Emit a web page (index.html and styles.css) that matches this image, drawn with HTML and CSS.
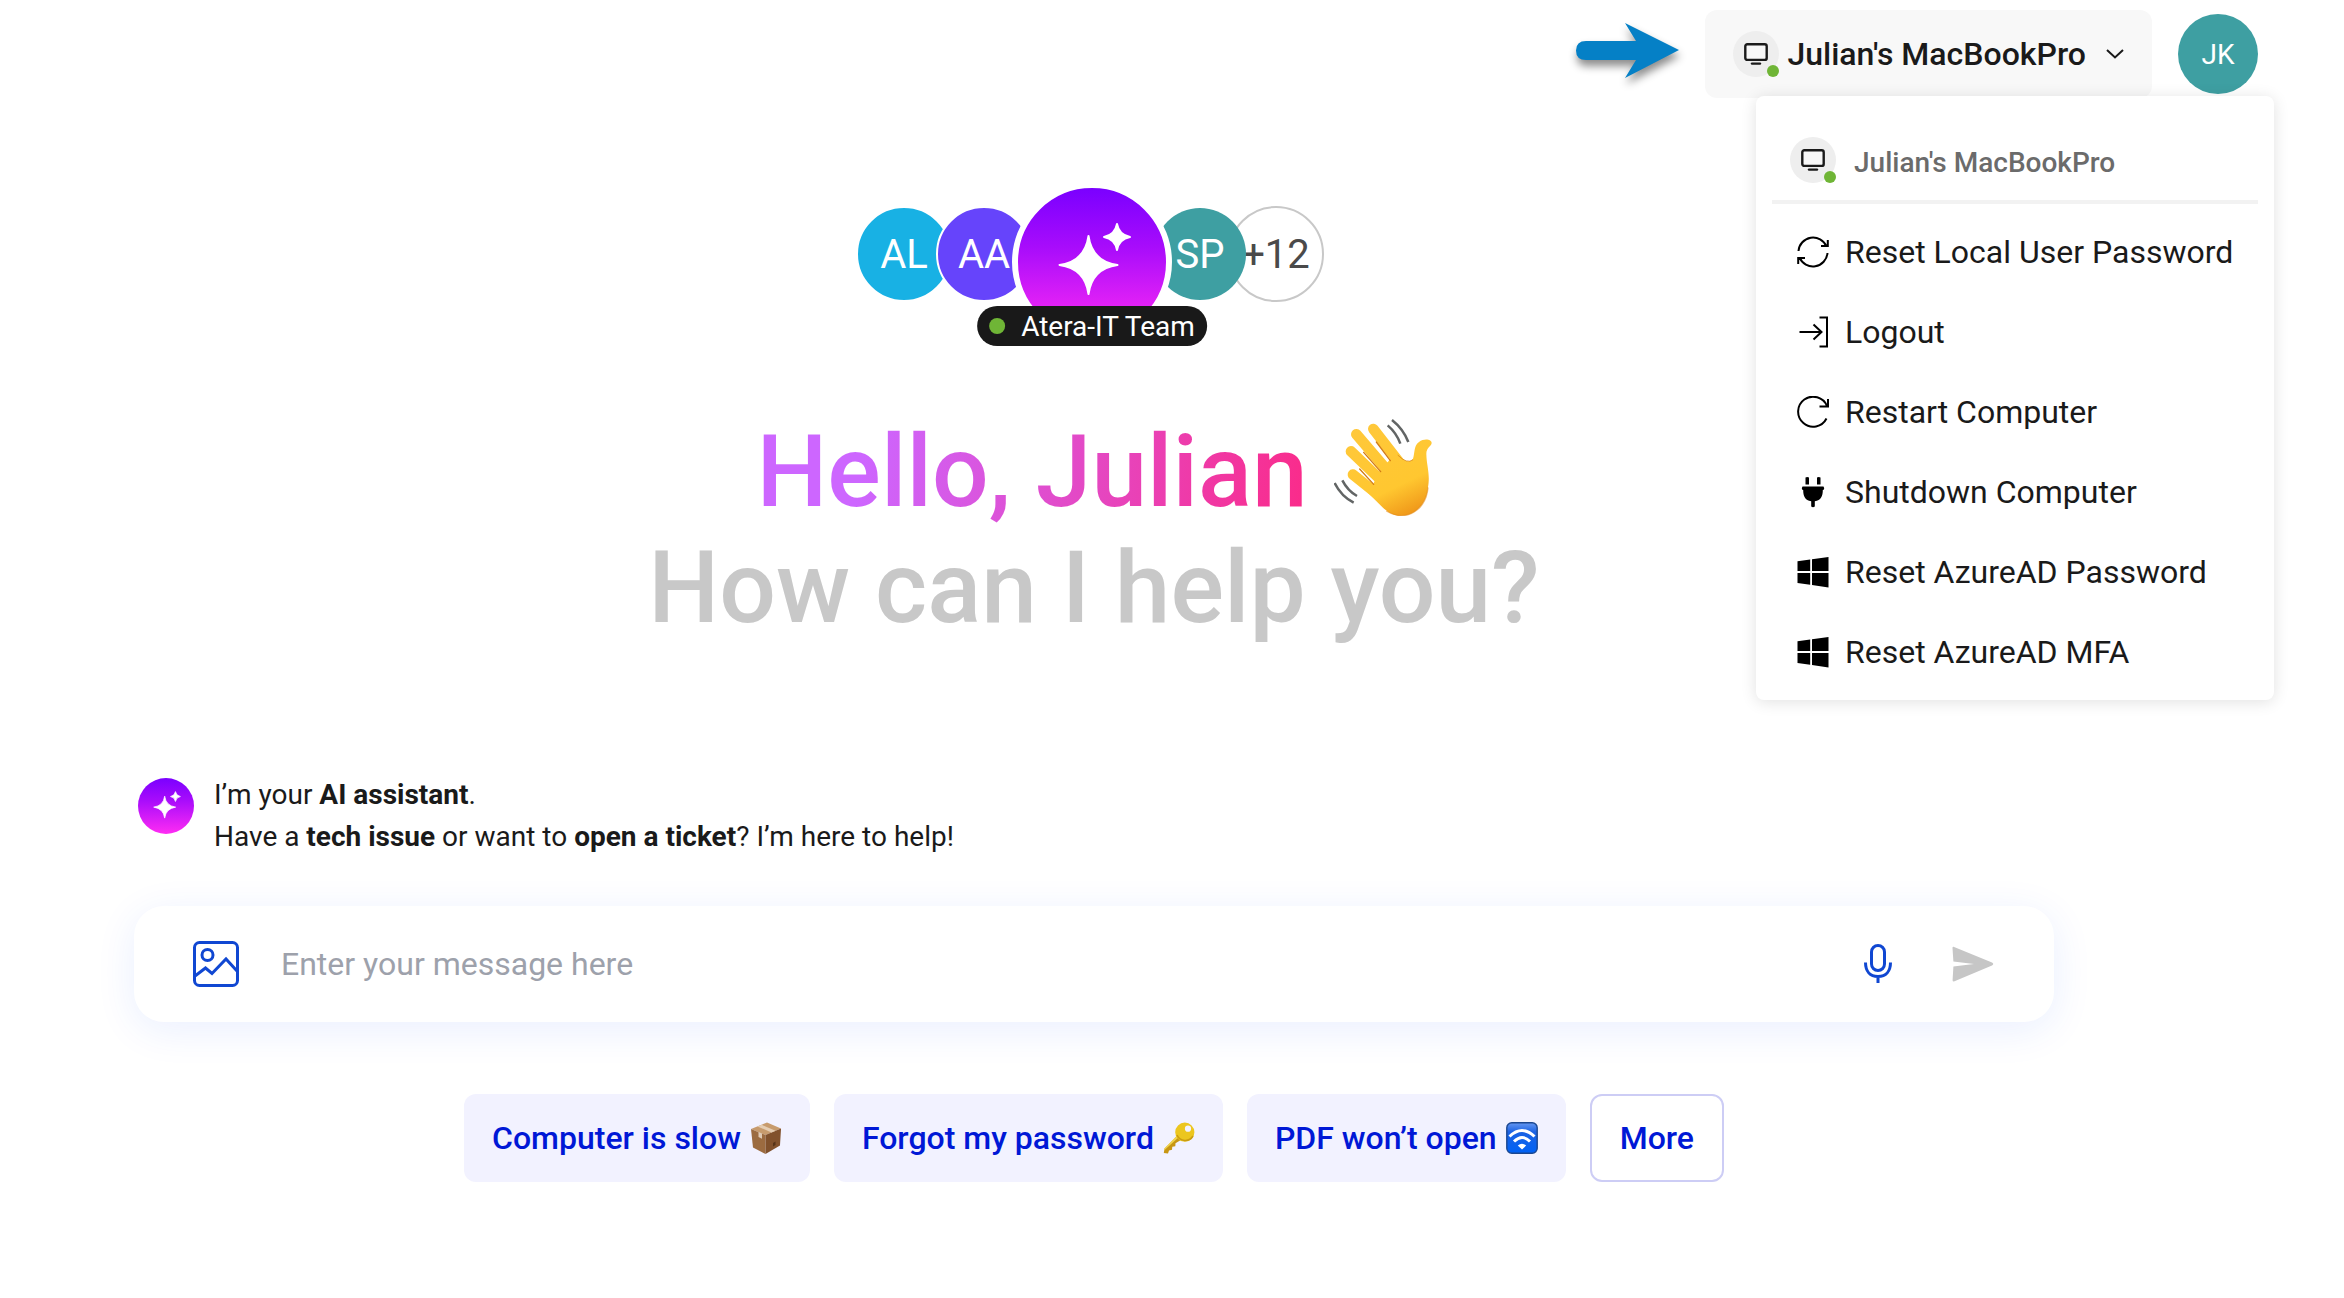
FILE: index.html
```html
<!DOCTYPE html>
<html lang="en">
<head>
    <meta charset="UTF-8">
    <meta name="viewport" content="width=device-width, initial-scale=1.0">
    <title>AI assistant</title>
    <link rel="stylesheet" href="styles.css">
</head>
<body>
    <!-- shared icons -->
    <svg class="sprite" aria-hidden="true">
        <symbol id="sparkle" viewBox="0 0 148 148">
            <g fill="#fff" stroke="#fff" stroke-width="2" stroke-linejoin="round">
                <path d="M70.500 48Q74 73.500 99.500 77Q74 80.500 70.500 106Q67 80.500 41.500 77Q67 73.500 70.500 48Z"/>
                <path d="M99 36Q101 47 112 49Q101 51 99 62Q97 51 86 49Q97 47 99 36Z"/>
            </g>
        </symbol>
        <symbol id="monitor" viewBox="0 0 24 22">
            <rect x="1.3" y="1.3" width="21.4" height="15.6" rx="2" fill="#f7f7f7" stroke="#1a1a1a" stroke-width="2.4"/>
            <path d="M8 20.6H16" stroke="#1a1a1a" stroke-width="2.4" stroke-linecap="round"/>
        </symbol>
        <symbol id="windows" viewBox="0 0 32 32">
            <path d="M.5 5.2L13.2 3.5V15H.5ZM15 3.2L31.5 1V15H15ZM.5 17H13.2V28.7L.5 27ZM15 17H31.5V31.4L15 29Z"/>
        </symbol>
    </svg>

    <header class="header">
        <svg class="pointer" viewBox="0 0 103 56" aria-hidden="true">
            <path d="M10 18H60L49 0L103 27L49 55L60 37H10Q0 37 0 27.500Q0 18 10 18Z" fill="#0580c6"/>
        </svg>
        <div class="device">
            <button class="device-button" type="button" aria-haspopup="true" aria-expanded="true">
                <span class="device-icon"><svg><use href="#monitor"/></svg></span>
                <span>Julian's MacBookPro</span>
                <svg class="chevron" viewBox="0 0 18 10" aria-hidden="true"><path d="M1 1L9 8.500L17 1"/></svg>
            </button>
            <div class="menu">
                <div class="menu-title">
                    <span class="device-icon"><svg><use href="#monitor"/></svg></span>
                    <span>Julian's MacBookPro</span>
                </div>
                <ul class="menu-list">
                    <li><button type="button">
                        <svg class="line" viewBox="0 0 32 32"><path d="M1.500 15A14.600 14.600 0 0 1 29.500 10.500M30.800 4V10H24M30.500 17A14.600 14.600 0 0 1 2.500 21.500M1.200 28V22H8"/></svg>
                        Reset Local User Password
                    </button></li>
                    <li><button type="button">
                        <svg class="line" viewBox="0 0 32 32"><path d="M2.500 16H24.500M16.500 8.500L24.500 16L16.500 23.500M22.500 1.500H30V30.500H22.500"/></svg>
                        Logout
                    </button></li>
                    <li><button type="button">
                        <svg class="line" viewBox="0 0 32 32"><path d="M30 10A15 15 0 1 0 29.500 22.500M31 3V10.500H22.500"/></svg>
                        Restart Computer
                    </button></li>
                    <li><button type="button">
                        <svg viewBox="0 0 32 32"><path d="M8.500 1.500Q10.200 .5 12 1.500V8.500H8.500ZM20 1.500Q21.800 .5 23.500 1.500V8.500H20ZM5.500 10.500H26.500Q28 12.300 26.500 14H25.800C25.800 20 24 24.500 17.800 25.300V30.500Q16 32 14.200 30.500V25.300C8 24.500 6.200 20 6.200 14H5.500Q4 12.300 5.500 10.500Z"/></svg>
                        Shutdown Computer
                    </button></li>
                    <li><button type="button">
                        <svg><use href="#windows"/></svg>
                        Reset AzureAD Password
                    </button></li>
                    <li><button type="button">
                        <svg><use href="#windows"/></svg>
                        Reset AzureAD MFA
                    </button></li>
                </ul>
            </div>
        </div>
        <button class="user" type="button">JK</button>
    </header>

    <main class="main">
        <div class="team">
            <span class="avatar blue">AL</span>
            <span class="avatar violet">AA</span>
            <div class="bot">
                <svg><use href="#sparkle"/></svg>
                <span class="team-name">Atera-IT Team</span>
            </div>
            <span class="avatar teal">SP</span>
            <span class="avatar more">+12</span>
        </div>

        <h1 class="greeting">
            <span class="hello">
                <span class="gradient-text">Hello, Julian</span>
                <svg class="wave" viewBox="39 24 294 294" role="img" aria-label="waving hand">
                    <defs>
                        <linearGradient id="skin" gradientUnits="userSpaceOnUse" x1="120" y1="50" x2="250" y2="318">
                            <stop offset="0" stop-color="#ffc83a"/>
                            <stop offset=".7" stop-color="#ffc730"/>
                            <stop offset="1" stop-color="#f0991a"/>
                        </linearGradient>
                    </defs>
                    <g fill="none" stroke="url(#skin)" stroke-width="32" stroke-linecap="round">
                        <path d="M157 57L245 170"/>
                        <path d="M106 73L215 200"/>
                        <path d="M90 124L195 225"/>
                        <path d="M96 194L185 265"/>
                    </g>
                    <path d="M230 134Q262 166 276 146C282 128 278 107 294 96C310 84 332 88 332 99C331 110 316 112 316 132C317 170 328 190 321 232C318 270 298 302 262 314C232 323 208 314 186 293L142 250L160 215L178 180L208 148Z" fill="url(#skin)"/>
                    <g fill="none" stroke="#d27c14" stroke-width="4" stroke-linecap="round">
                        <path d="M166 96L208 152"/>
                        <path d="M128 127L179 185"/>
                        <path d="M116 177L158 223"/>
                        <path d="M231 136Q258 163 275 150" stroke-width="2"/>
                    </g>
                    <path d="M196 303Q228 323 262 314C298 302 318 270 321 232" fill="none" stroke="#e58d1c" stroke-width="4" opacity=".6"/>
                    <g fill="none" stroke="#626565" stroke-width="7.500">
                        <path d="M213 30Q247 57 262 96M200 46Q227 69 238 101M41 219Q60 258 98 278M64 211Q80 242 108 258"/>
                    </g>
                </svg>
            </span>
            <span class="question">How can I help you?</span>
        </h1>

        <div class="intro">
            <span class="bot-small"><svg><use href="#sparkle"/></svg></span>
            <p>I’m your <b>AI assistant</b>.<br>Have a <b>tech issue</b> or want to <b>open a ticket</b>? I’m here to help!</p>
        </div>

        <form class="composer">
            <button class="icon-button" type="button" aria-label="Add image">
                <svg class="icon-image" viewBox="0 0 46 46"><rect x="1.500" y="1.500" width="43" height="43" rx="5"/><circle cx="14.500" cy="14" r="5.500"/><path d="M2 35L12.500 27L19 32.500L33 18L44 30"/></svg>
            </button>
            <input class="message" type="text" placeholder="Enter your message here" aria-label="Message">
            <button class="icon-button" type="button" aria-label="Voice input">
                <svg class="icon-mic" viewBox="0 0 28 40"><rect x="7.500" y="1.500" width="13" height="25" rx="6.500"/><path d="M1.500 18.500C1.500 27 6 32.500 14 32.500S26.500 27 26.500 18.500M14 32.500V39"/></svg>
            </button>
            <button class="icon-button" type="submit" aria-label="Send">
                <svg class="icon-send" viewBox="0 0 42 36"><path d="M1.500 .8L40 16.500Q42.500 18 40 19.500L2.500 35.300Q.5 35.800 .6 34L1.400 20.500L22 18L1.400 15.500L.5 2Q.5 .5 1.500 .8Z"/></svg>
            </button>
        </form>

        <div class="suggestions">
            <button class="chip" type="button">Computer is slow
                <svg viewBox="0 0 32 32" aria-hidden="true">
                    <path d="M1 7L17 .5L31 6.500L15.500 13Z" fill="#c79b6d"/>
                    <path d="M1 7L15.500 13V32L3 25.500Z" fill="#9c6b40"/>
                    <path d="M15.500 13L31 6.500L30 23.500L15.500 32Z" fill="#81512c"/>
                    <path d="M7.500 4.400L11.500 2.700L25.500 8.800L21.500 10.500Z" fill="#e5cdb2"/>
                    <path d="M8.500 10V15L12 16.700V11.600Z" fill="#dfc9b4"/>
                    <path d="M23 21L25.500 19.500V23L23 24.400Z" fill="#563319"/>
                </svg>
            </button>
            <button class="chip" type="button">Forgot my password
                <svg viewBox="0 0 32 32" aria-hidden="true">
                    <path d="M15 13L1.500 26.500L.8 31L5 31.400L6 28.500L9 27.800L9.300 24.700L12.300 24.300L12.500 21.300L19.500 17Z" fill="#c79613"/>
                    <path d="M14.800 12.700L1.500 26.500L1 28.500L16 15Z" fill="#f0d34c"/>
                    <path fill-rule="evenodd" d="M21.800 .6A9.600 9.600 0 1 0 21.800 19.800A9.600 9.600 0 1 0 21.800 .6ZM25 3.600A3.100 3.100 0 1 1 25 9.800A3.100 3.100 0 1 1 25 3.600Z" fill="#ecc61f"/>
                    <path d="M14 13A9 9 0 0 0 30 14" fill="none" stroke="#c99c12" stroke-width="1.500"/>
                </svg>
            </button>
            <button class="chip" type="button">PDF won’t open
                <svg viewBox="0 0 32 32" aria-hidden="true">
                    <defs>
                        <linearGradient id="tile" x1="0" y1="0" x2="0" y2="1">
                            <stop offset="0" stop-color="#6597f2"/>
                            <stop offset=".3" stop-color="#1b62e3"/>
                            <stop offset="1" stop-color="#0062f5"/>
                        </linearGradient>
                    </defs>
                    <rect x=".8" y=".8" width="30.400" height="30.400" rx="5" fill="url(#tile)" stroke="#1b4790" stroke-width="1.400"/>
                    <g fill="none" stroke="#fff" stroke-width="3">
                        <path d="M3.500 14.500Q16 2.500 28.500 14.500M8 19.500Q16 11.500 24 19.500"/>
                    </g>
                    <path d="M11.800 23.500Q16 20 20.200 23.500L16 27.500Z" fill="#fff"/>
                </svg>
            </button>
            <button class="chip outline" type="button">More</button>
        </div>
    </main>
</body>
</html>
```

FILE: styles.css
```css
* {
    margin: 0;
    padding: 0;
    box-sizing: border-box;
}

body {
    font-family: Roboto, "Liberation Sans", sans-serif;
    font-size: 32px;
    color: #1a1a1a;
    background: #fff;
    min-height: 100vh;
}

button {
    font: inherit;
    color: inherit;
    background: none;
    border: none;
    cursor: pointer;
}

svg {
    display: block;
    flex: none;
}

.sprite {
    position: absolute;
    width: 0;
    height: 0;
}

/* header */
.header {
    display: flex;
    justify-content: flex-end;
    align-items: center;
    gap: 26px;
    padding: 10px 86px 0 24px;
}

.pointer {
    width: 103px;
    height: 56px;
    margin-bottom: 6px;
    overflow: visible;
    filter: drop-shadow(1px 6px 4px rgba(0, 0, 0, 0.45));
}

.device {
    position: relative;
}

.device-button {
    display: flex;
    align-items: center;
    height: 88px;
    padding: 0 28px;
    background: #f8f8f8;
    border-radius: 12px;
    font-weight: 500;
}

.device-icon {
    position: relative;
    display: flex;
    align-items: center;
    justify-content: center;
    width: 46px;
    height: 46px;
    margin-right: 8px;
    background: #eee;
    border-radius: 50%;
}

.device-icon svg {
    width: 24px;
    height: 22px;
}

/* online dot */
.device-icon::after {
    content: "";
    position: absolute;
    right: 0;
    bottom: 0;
    width: 12px;
    height: 12px;
    background: #6fb536;
    border-radius: 50%;
}

.chevron {
    width: 18px;
    height: 10px;
    margin-left: 20px;
    fill: none;
    stroke: #1a1a1a;
    stroke-width: 2;
}

.user {
    width: 80px;
    height: 80px;
    border-radius: 50%;
    background: #3e9fa2;
    color: #fff;
    font-size: 28px;
}

/* dropdown */
.menu {
    position: absolute;
    z-index: 5;
    top: 86px;
    right: -122px;
    width: 518px;
    padding: 0 16px 8px;
    background: #fff;
    border-radius: 8px;
    box-shadow: 0 2px 16px rgba(0, 0, 0, 0.12);
}

.menu-title {
    display: flex;
    align-items: flex-end;
    padding: 41px 18px 17px;
    border-bottom: 4px solid #f2f2f2;
    margin-bottom: 8px;
    color: #6b6b6b;
    font-size: 28px;
    line-height: 40px;
    font-weight: 500;
}

.menu-title .device-icon {
    margin-right: 18px;
}

.menu-list {
    list-style: none;
}

.menu-list button {
    display: flex;
    align-items: center;
    gap: 16px;
    width: 100%;
    height: 80px;
    padding: 0 25px;
    text-align: left;
    white-space: nowrap;
}

.menu-list svg {
    width: 32px;
    height: 32px;
    fill: #000;
}

.menu-list .line {
    fill: none;
    stroke: #000;
    stroke-width: 2;
}

/* page column */
.main {
    display: flex;
    flex-direction: column;
    padding: 84px 290px 40px 134px;
}

.team {
    display: flex;
    justify-content: center;
    padding-right: 8px;
}

.avatar {
    display: flex;
    align-items: center;
    justify-content: center;
    width: 96px;
    height: 96px;
    margin-top: 24px;
    border: 2px solid #fff;
    border-radius: 50%;
    color: #fff;
    font-size: 40px;
}

.blue {
    background: #18b1e4;
}

.violet {
    background: #6644fb;
    margin-left: -16px;
}

.teal {
    position: relative;
    background: #3e9fa2;
    border-color: transparent;
    background-clip: padding-box;
    margin-left: -20px;
}

.more {
    border-color: #c8c8c8;
    color: #4a4a4a;
    margin-left: -20px;
}

.bot {
    position: relative;
    z-index: 1;
    width: 160px;
    height: 160px;
    margin-left: -20px;
    border: 6px solid #fff;
    border-radius: 50%;
    background: linear-gradient(#7a00ff, #a80cfb 40%, #ff2cf3);
}

.bot svg {
    width: 148px;
    height: 148px;
}

.team-name {
    position: absolute;
    left: 50%;
    bottom: -10px;
    transform: translateX(-50%);
    display: flex;
    align-items: center;
    gap: 16px;
    height: 40px;
    padding: 0 12px;
    background: #191919;
    border-radius: 20px;
    color: #fff;
    font-size: 28px;
    white-space: nowrap;
}

.team-name::before {
    content: "";
    width: 16px;
    height: 16px;
    background: #6fb536;
    border-radius: 50%;
}

.greeting {
    margin-top: 72px;
    font-size: 100px;
    line-height: 116px;
    font-weight: 500;
    text-align: center;
}

.hello {
    display: flex;
    align-items: center;
    justify-content: center;
    gap: 26px;
}

.gradient-text {
    background: linear-gradient(100deg, #cd66ff 20%, #fb2a88);
    -webkit-background-clip: text;
    background-clip: text;
    color: transparent;
}

.wave {
    width: 98px;
    height: 98px;
    margin-bottom: 10px;
}

.question {
    display: block;
    color: #c8c8c8;
}

.intro {
    display: flex;
    align-items: flex-start;
    gap: 20px;
    margin: 128px 0 48px;
    padding-left: 4px;
    font-size: 28px;
    line-height: 42px;
}

.bot-small {
    margin-top: 4px;
    border-radius: 50%;
    background: linear-gradient(#7a00ff, #a80cfb 40%, #ff2cf3);
}

.bot-small svg {
    width: 56px;
    height: 56px;
}

/* message box */
.composer {
    display: flex;
    align-items: center;
    height: 116px;
    padding: 0 60px 0 59px;
    border-radius: 30px;
    background: #fff;
    box-shadow: 0 8px 40px rgba(20, 80, 255, 0.09);
}

.message {
    flex: 1;
    min-width: 0;
    margin: 0 42px;
    border: none;
    outline: none;
    font: inherit;
}

.message::placeholder {
    color: #9da1ab;
    opacity: 1;
}

.icon-image,
.icon-mic {
    fill: none;
    stroke: #1047d2;
    stroke-width: 3;
}

.icon-image {
    width: 46px;
    height: 46px;
}

.icon-mic {
    width: 28px;
    height: 40px;
    margin-right: 60px;
}

.icon-send {
    width: 42px;
    height: 36px;
    fill: #c6c6c6;
}

.suggestions {
    display: flex;
    justify-content: center;
    gap: 24px;
    margin-top: 72px;
}

.chip {
    display: flex;
    align-items: center;
    gap: 9px;
    height: 88px;
    padding: 0 28px;
    border-radius: 12px;
    background: #f2f2ff;
    color: #0018d6;
    font-weight: 500;
    white-space: nowrap;
}

.chip svg {
    width: 32px;
    height: 32px;
}

.outline {
    background: #fff;
    border: 2px solid #cdcdf5;
}
```
